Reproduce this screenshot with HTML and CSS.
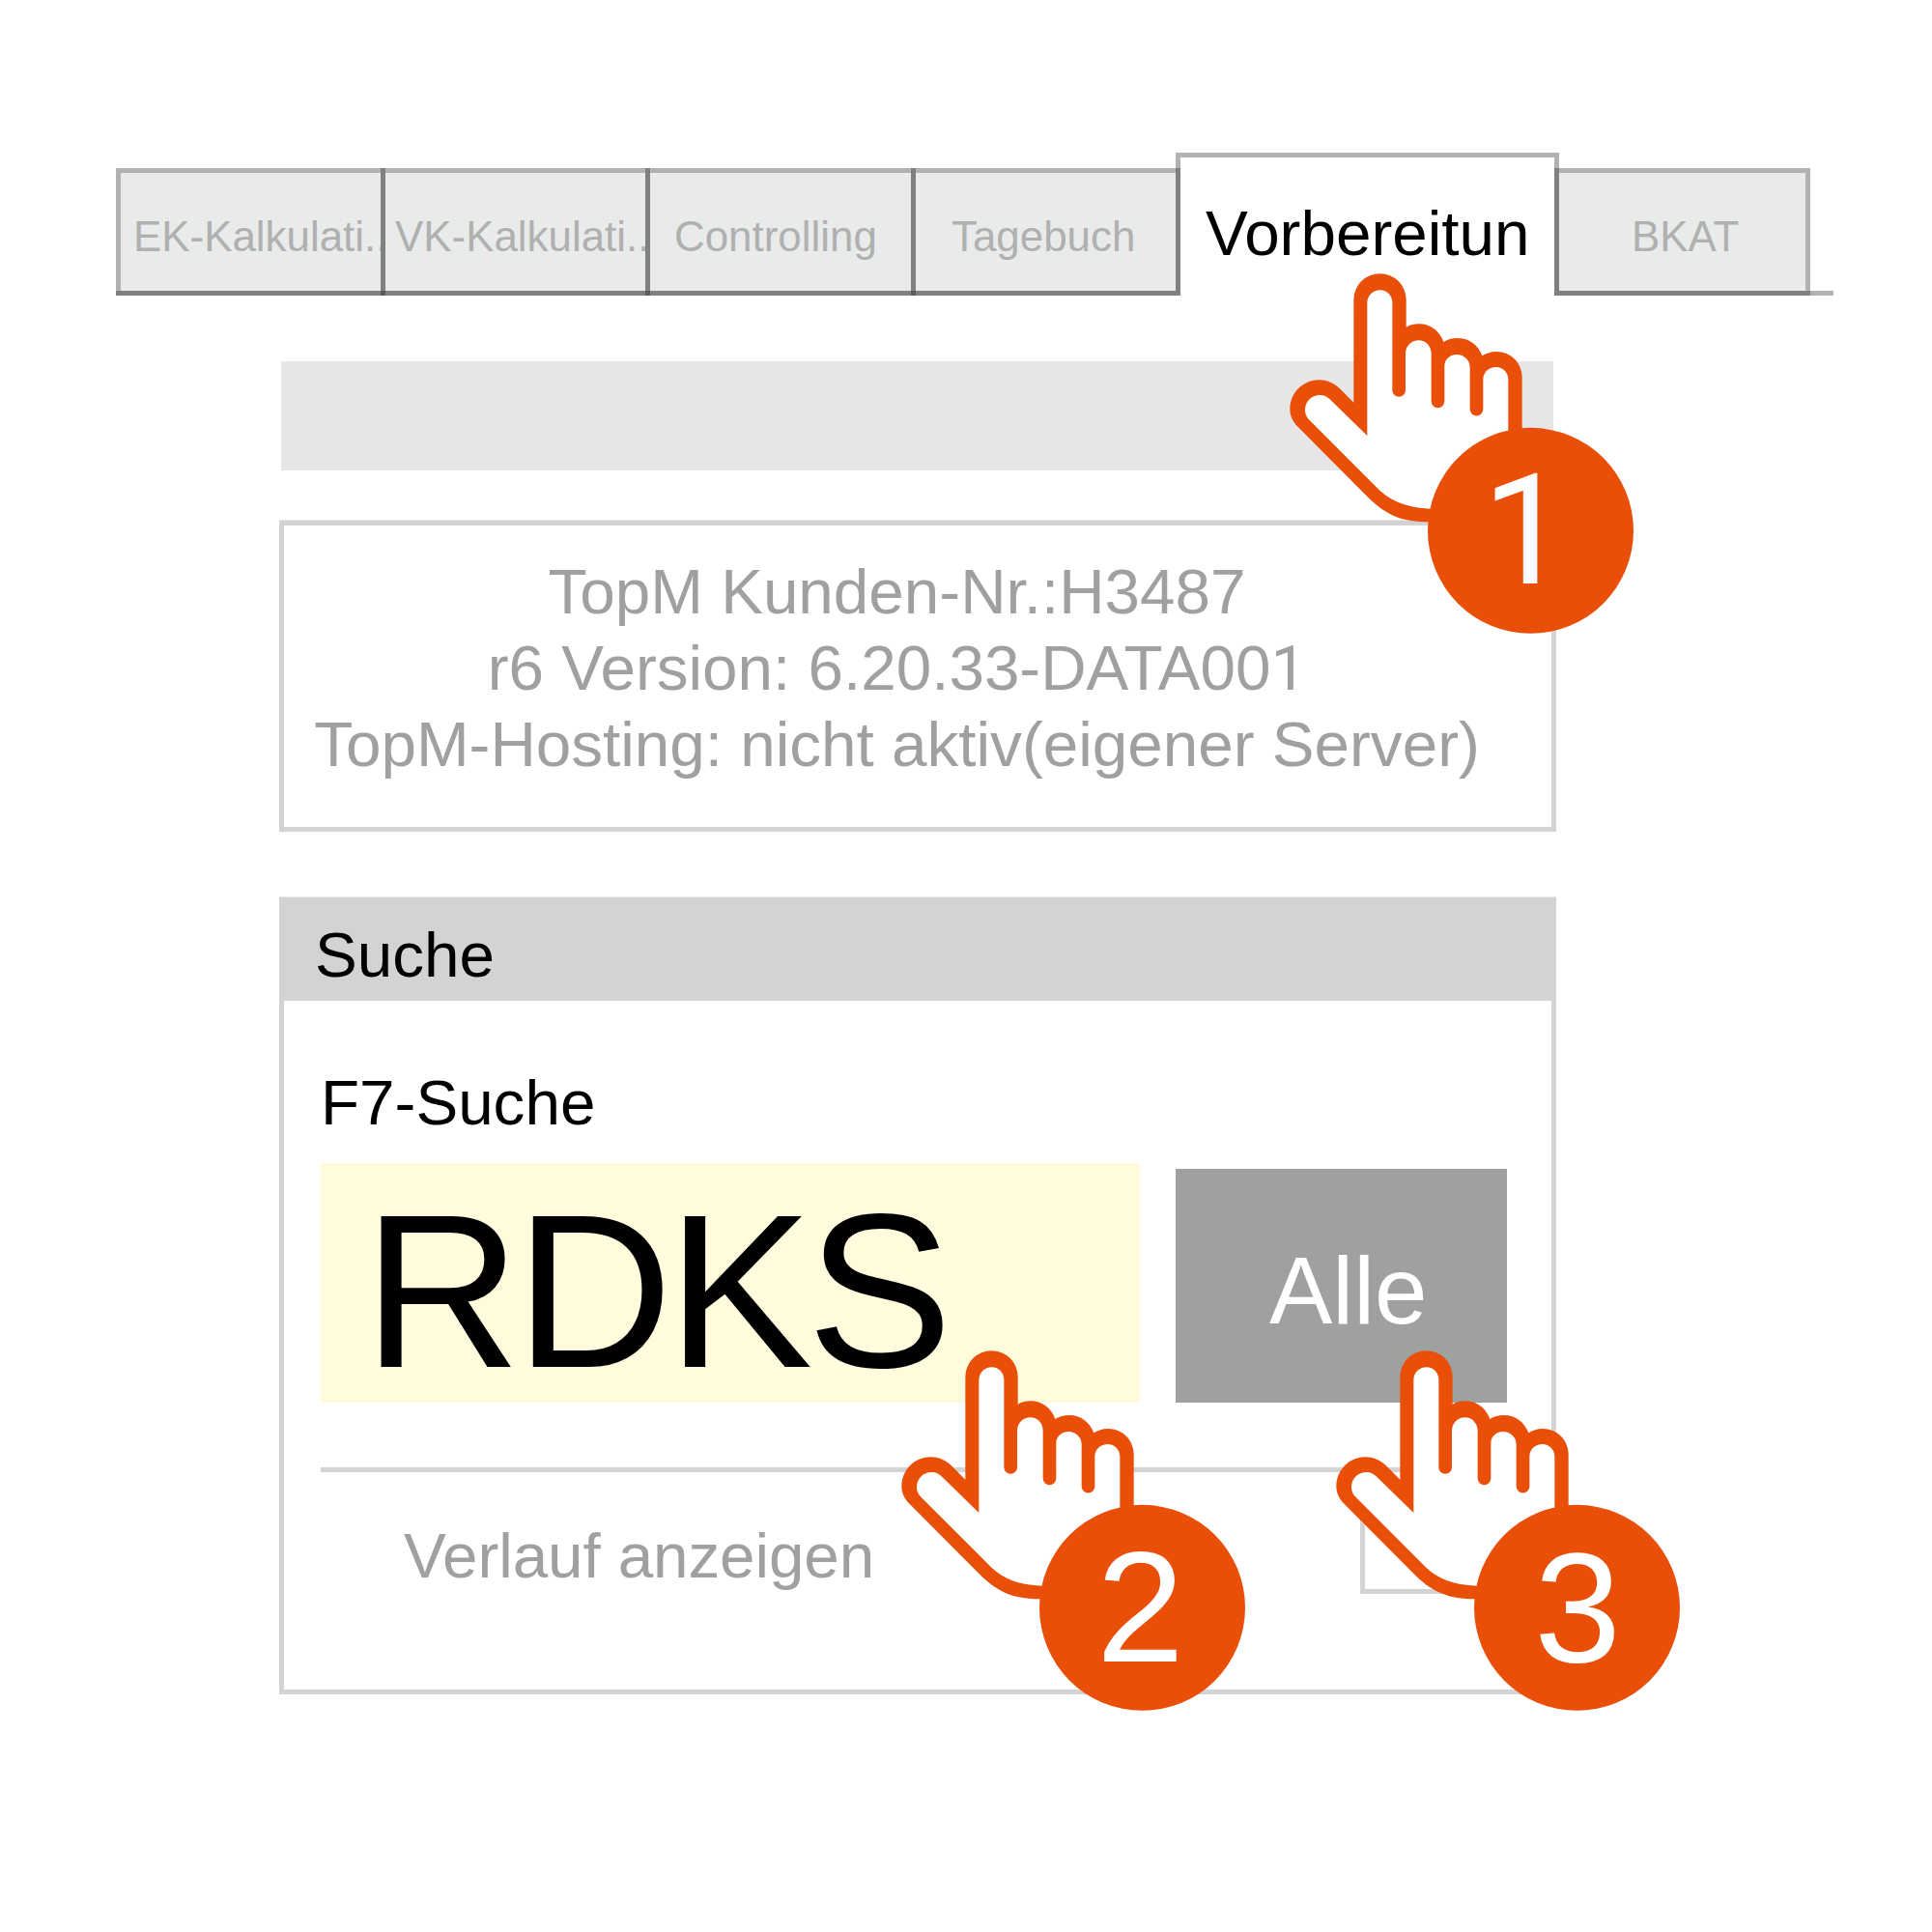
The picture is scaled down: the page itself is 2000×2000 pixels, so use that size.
FILE: index.html
```
<!DOCTYPE html>
<html lang="de">
<head>
<meta charset="utf-8">
<title>F7-Suche</title>
<link rel="stylesheet" href="styles.css">
</head>
<body>
<svg class="defs" width="0" height="0" aria-hidden="true">
  <symbol id="hand" viewBox="72 30 1077 1134">
    <path class="hand-line" d="M274 440V121A81.5 81.5 0 0 1 437 121V206C449 199 463 196 477 196C512 196 541 218 553 252C565 244 580 240 597 240C632 240 660 261 673 295C686 287 700 282 717 282C762 282 797 317 797 362V600L600 811H505C430 811 380 793 326 742L102 517C85 500 76 482 76 458C77 408 118 370 167 370C190 370 212 379 230 396Z"/>
    <path class="hand-fill" d="M316 543V130C316 108 334 91 356 91C378 91 394 108 394 130V402A20.5 20.5 0 0 0 435 402V288C435 265 453 247 476 247C498 247 515 265 515 288V436A20.5 20.5 0 0 0 556 436V325C557 305 574 291 595 291C616 291 635 308 635 330V461A20.5 20.5 0 0 0 676 461V367C677 346 694 330 716 330C738 330 754 347 754 369V600L600 771L512 770C440 766 395 750 355 713L134 492C126 483 123 474 123 463C123 437 143 417 169 417C181 417 191 421 200 430Z"/>
    <circle class="hand-line" cx="823.5" cy="838" r="319.5"/>
  </symbol>
</svg>

<main class="page">
  <nav class="tabs">
    <div class="tab tab-ek">EK-Kalkulati..</div>
    <div class="tab tab-vk">VK-Kalkulati..</div>
    <div class="tab tab-controlling">Controlling</div>
    <div class="tab tab-tagebuch">Tagebuch</div>
    <div class="tab tab-active">Vorbereitun</div>
    <div class="tab tab-bkat">BKAT</div>
    <div class="tabs-rest"></div>
  </nav>

  <div class="content">
    <div class="bar"></div>

    <section class="info">
      <p>TopM Kunden-Nr.:H3487</p>
      <p>r6 Version: 6.20.33-DATA00<span class="one">1</span></p>
      <p>TopM-Hosting: nicht aktiv(eigener Server)</p>
    </section>

    <section class="search">
      <h1 class="search-title">Suche</h1>
      <div class="search-body">
        <div class="label">F7-Suche</div>
        <div class="search-row">
          <div class="field">RDKS</div>
          <div class="button">Alle</div>
        </div>
        <div class="rule"></div>
        <div class="history">
          <span class="history-label">Verlauf anzeigen</span>
          <span class="checkbox"></span>
        </div>
      </div>
    </section>
  </div>

  <svg class="step step-1" viewBox="72 30 1077 1134">
    <use href="#hand" x="72" y="30" width="1077" height="1134"/>
    <text class="digit digit-one" x="673" y="1002">1</text>
  </svg>
  <svg class="step step-2" viewBox="72 30 1077 1134">
    <use href="#hand" x="72" y="30" width="1077" height="1134"/>
    <text class="digit" x="681" y="1005">2</text>
  </svg>
  <svg class="step step-3" viewBox="72 30 1077 1134">
    <use href="#hand" x="72" y="30" width="1077" height="1134"/>
    <text class="digit digit-three" x="691" y="1005">3</text>
  </svg>
</main>
</body>
</html>
```
FILE: styles.css
```
* {
  box-sizing: border-box;
}

body {
  margin: 0;
  background: #fff;
  font-family: "Liberation Sans", Arial, sans-serif;
  font-size: 65.6px;
  line-height: 79px;
  color: #000;
}

p,
h1 {
  margin: 0;
  font-size: inherit;
  font-weight: normal;
}

.defs {
  position: absolute;
}

.page {
  position: relative;
  width: 2000px;
  height: 2000px;
  overflow: hidden;
}

/* Tab strip: each tab paints translucent edges, so shared edges darken */
.tabs {
  --edge: linear-gradient(rgba(43, 43, 43, 0.364), rgba(43, 43, 43, 0.364));
  --base: linear-gradient(rgba(77, 74, 75, 0.706), rgba(77, 74, 75, 0.706));
  display: flex;
  align-items: flex-start;
  height: 306px;
  padding: 158px 0 0 120px;
}

.tab {
  flex: none;
  width: 279px;
  height: 132px;
  margin-top: 16px;
  padding-top: 5px;
  background:
    var(--edge) 0 0 / 100% 5px no-repeat,
    var(--edge) 0 5px / 5px 122px no-repeat,
    var(--edge) 100% 5px / 5px 122px no-repeat,
    var(--base) 0 100% / 100% 5px no-repeat,
    linear-gradient(#e8ebe9, #e8ebe9) 5px 5px / calc(100% - 10px) 122px no-repeat;
  font-size: 43.9px;
  line-height: 131px;
  color: #b0b0b0;
  white-space: nowrap;
}

.tab + .tab {
  margin-left: -5px;
}

.tab-ek {
  padding-left: 18px;
}

.tab-vk {
  padding-left: 15px;
}

.tab-controlling {
  width: 280px;
  padding-left: 30px;
}

.tab-tagebuch {
  padding-left: 42px;
}

.tab-active {
  width: 397px;
  height: 143px;
  margin-top: 0;
  padding-left: 31px;
  background:
    var(--edge) 0 0 / 100% 5px no-repeat,
    var(--edge) 0 5px / 5px 138px no-repeat,
    var(--edge) 100% 5px / 5px 138px no-repeat;
  font-size: 65.6px;
  line-height: 158px;
  color: #000;
}

.tab-bkat {
  width: 265px;
  padding-left: 80px;
}

.tabs-rest {
  width: 24px;
  height: 5px;
  margin-top: 143px;
  background: #b2b2b2;
}

.content {
  display: flex;
  flex-direction: column;
  width: 1322px;
  margin: 68px 0 0 289px;
}

.bar {
  height: 113px;
  margin: 0 3px 0 2px;
  background: #e6e6e6;
}

.info {
  height: 322px;
  margin-top: 52px;
  padding: 29px 43px 0 0;
  border: 5px solid #d3d3d3;
  box-shadow: 0 -1px 0 #e9e9e9;
  color: #9fa19f;
  text-align: center;
  white-space: nowrap;
}

.one {
  font-family: Roboto, sans-serif;
  line-height: 1;
}

.search {
  height: 825px;
  margin-top: 68px;
  border: 5px solid #d3d3d3;
  box-shadow: 0 -1px 0 #e9e9e9;
}

.search-title {
  height: 102px;
  padding: 15px 0 0 32px;
  background: #d3d3d3;
}

.search-body {
  padding: 66px 46px 0 38px;
}

.search-row {
  display: flex;
  align-items: flex-end;
  gap: 37px;
  margin-top: 23px;
}

.field {
  width: 848px;
  height: 248px;
  padding-left: 44px;
  background: #fffbdc;
  font-size: 226px;
  line-height: 265px;
  letter-spacing: -6px;
}

.button {
  width: 343px;
  height: 242px;
  padding-left: 97px;
  background: #9fa19f;
  font-size: 98px;
  line-height: 252px;
  color: #fff;
}

.rule {
  height: 5px;
  margin-top: 67px;
  background: #d3d3d3;
}

.history {
  display: flex;
  align-items: center;
  justify-content: space-between;
  width: 1171px;
  height: 95px;
  margin-top: 31px;
  padding-left: 86px;
}

.history-label {
  padding-top: 16px;
  color: #9fa19f;
  letter-spacing: -0.1px;
}

.checkbox {
  width: 95px;
  height: 95px;
  border: 5px solid #d3d3d3;
}

/* Numbered pointing hands laid over the panel */
.step {
  position: absolute;
  width: 359px;
  height: 378px;
}

.step-1 {
  left: 1334px;
  top: 280px;
}

.step-2 {
  left: 932px;
  top: 1395px;
}

.step-3 {
  left: 1382px;
  top: 1395px;
}

.hand-line {
  fill: #e94f08;
}

.hand-fill {
  fill: #fff;
}

.digit {
  fill: #fff;
  font-size: 490px;
}

.digit-one {
  font-family: Roboto, sans-serif;
  font-size: 481px;
}

.digit-three {
  font-size: 484px;
}
```
